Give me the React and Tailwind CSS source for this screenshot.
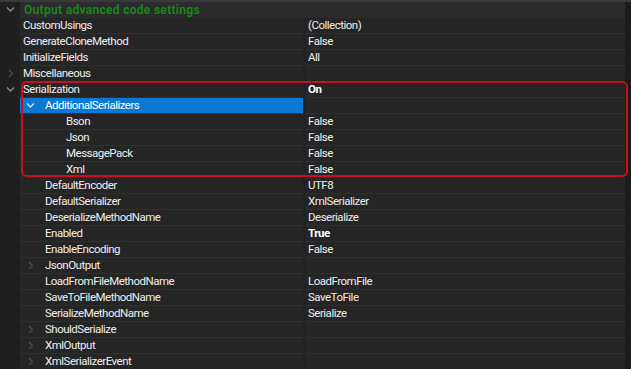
import React from 'react'

const rows = [
    { name: 'CustomUsings', value: '(Collection)', level: 0 },
    { name: 'GenerateCloneMethod', value: 'False', level: 0 },
    { name: 'InitializeFields', value: 'All', level: 0 },
    { name: 'Miscellaneous', value: '', level: 0, chevron: 'right' },
    { name: 'Serialization', value: 'On', level: 0, chevron: 'down', bold: true },
    { name: 'AdditionalSerializers', value: '', level: 1, chevron: 'down', selected: true },
    { name: 'Bson', value: 'False', level: 2 },
    { name: 'Json', value: 'False', level: 2 },
    { name: 'MessagePack', value: 'False', level: 2 },
    { name: 'Xml', value: 'False', level: 2 },
    { name: 'DefaultEncoder', value: 'UTF8', level: 1 },
    { name: 'DefaultSerializer', value: 'XmlSerializer', level: 1 },
    { name: 'DeserializeMethodName', value: 'Deserialize', level: 1 },
    { name: 'Enabled', value: 'True', level: 1, bold: true },
    { name: 'EnableEncoding', value: 'False', level: 1 },
    { name: 'JsonOutput', value: '', level: 1, chevron: 'right' },
    { name: 'LoadFromFileMethodName', value: 'LoadFromFile', level: 1 },
    { name: 'SaveToFileMethodName', value: 'SaveToFile', level: 1 },
    { name: 'SerializeMethodName', value: 'Serialize', level: 1 },
    { name: 'ShouldSerialize', value: '', level: 1, chevron: 'right' },
    { name: 'XmlOutput', value: '', level: 1, chevron: 'right' },
    { name: 'XmlSerializerEvent', value: '', level: 1, chevron: 'right' },
]

const Chevron = ({ dir, color }) => (
    <svg width="9" height="9" viewBox="0 0 9 9" fill="none" stroke={color} strokeWidth="1.3">
        {dir === 'down' ? <path d="M1 2.5 L4.5 6 L8 2.5" /> : <path d="M3 1 L6.5 4.5 L3 8" />}
    </svg>
)

const Row = ({ row }) => {
    const indent = row.level === 0 ? 'pl-[3px]' : row.level === 1 ? 'pl-[25px]' : 'pl-[46px]'
    return (
        <div className="flex h-4 shrink-0">
            <div className="relative w-[20px] shrink-0 bg-[#1f1f1f]">
                {row.chevron && row.level === 0 && (
                    <span className="absolute left-[6px] top-[3px]">
                        <Chevron dir={row.chevron} color={row.chevron === 'down' ? '#8a8a8a' : '#4a4a4a'} />
                    </span>
                )}
            </div>
            <div
                className={`relative flex w-[283px] shrink-0 items-center border-b border-[#2f2f2f] ${indent} ${
                    row.selected ? 'bg-[#0a78d4] text-white' : 'text-[#ededed]'
                }`}
            >
                {row.chevron && row.level === 1 && (
                    <span className="absolute left-[6px] top-[3px]">
                        <Chevron dir={row.chevron} color={row.chevron === 'down' ? '#cfe4f7' : '#4a4a4a'} />
                    </span>
                )}
                <span className="tracking-[-0.5px]">{row.name}</span>
            </div>
            <div className="w-[3px] shrink-0 bg-[#222222]" />
            <div
                className={`flex flex-1 items-center border-b border-[#2f2f2f] pl-[2px] text-[#ededed] ${
                    row.bold ? 'font-bold text-white' : ''
                }`}
            >
                <span className="tracking-[-0.5px]">{row.value}</span>
            </div>
            <div className="w-[6px] shrink-0 bg-[#1b1b1b]" />
        </div>
    )
}

const App = () => {
    return (
        <div
            className="relative flex h-[369px] w-[631px] flex-col overflow-hidden bg-[#252526] text-[11.5px] leading-none"
            style={{ fontFamily: 'Roboto, "Liberation Sans", sans-serif' }}
        >
            <div className="flex h-[18px] shrink-0 border-t-2 border-[#3a3a3a]">
                <div className="relative w-[20px] shrink-0 bg-[#1f1f1f]">
                    <span className="absolute left-[6px] top-[3px]">
                        <Chevron dir="down" color="#8a8a8a" />
                    </span>
                </div>
                <div className="flex flex-1 items-center bg-[#2b2b2d] pl-[4px] text-[12px] font-bold tracking-[0.3px] text-[#1a851a]">
                    Output advanced code settings
                </div>
                <div className="w-[6px] shrink-0 bg-[#1b1b1b]" />
            </div>
            {rows.map((r) => (
                <Row key={r.name} row={r} />
            ))}
            <div className="pointer-events-none absolute left-[21px] top-[81px] h-[96px] w-[607px] rounded-[6px] border-2 border-[#c8101e]" />
        </div>
    )
}

export default App
